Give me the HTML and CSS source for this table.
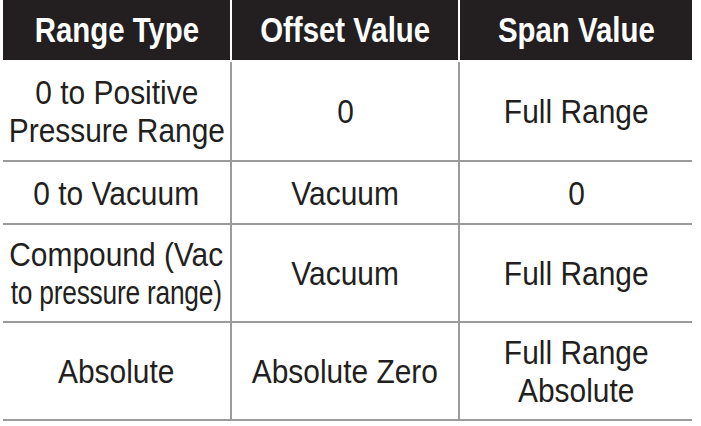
FILE: index.html
```html
<!DOCTYPE html>
<html>
<head>
<meta charset="utf-8">
<link rel="stylesheet" href="styles.css">
</head>
<body>
<div class="table">
  <div class="row head">
    <div class="cell"><span class="txt">Range Type</span></div>
    <div class="cell"><span class="txt">Offset Value</span></div>
    <div class="cell"><span class="txt">Span Value</span></div>
  </div>
  <div class="row r1">
    <div class="cell"><span class="txt">0 to Positive<br>Pressure Range</span></div>
    <div class="cell"><span class="txt">0</span></div>
    <div class="cell"><span class="txt">Full Range</span></div>
  </div>
  <div class="row r2">
    <div class="cell"><span class="txt">0 to Vacuum</span></div>
    <div class="cell"><span class="txt">Vacuum</span></div>
    <div class="cell"><span class="txt">0</span></div>
  </div>
  <div class="row r3">
    <div class="cell"><span class="txt">Compound (Vac<br><span class="tight">to pressure range)</span></span></div>
    <div class="cell"><span class="txt">Vacuum</span></div>
    <div class="cell"><span class="txt">Full Range</span></div>
  </div>
  <div class="row r4">
    <div class="cell"><span class="txt">Absolute</span></div>
    <div class="cell"><span class="txt">Absolute Zero</span></div>
    <div class="cell"><span class="txt">Full Range<br>Absolute</span></div>
  </div>
</div>
</body>
</html>
```
FILE: styles.css
```css
html, body {
  margin: 0;
  padding: 0;
  background: #ffffff;
}
.table {
  padding-left: 3px;
  width: 689px;
  font-family: "Liberation Sans", Arial, sans-serif;
  color: #231f20;
}
.row {
  display: grid;
  grid-template-columns: 229px 228px 232px;
}
.cell {
  box-sizing: border-box;
  display: flex;
  align-items: center;
  justify-content: center;
  text-align: center;
  border-bottom: 2px solid #9b9b9b;
  overflow: visible;
}
.txt {
  display: inline-block;
  white-space: nowrap;
  font-size: 34px;
  line-height: 38px;
  transform: scaleX(0.88);
  transform-origin: center;
}
.row .cell:nth-child(1),
.row .cell:nth-child(2) {
  border-right: 2px solid #9b9b9b;
}
.head {
  height: 60px;
  margin-bottom: 2px;
}
.head .cell {
  background: #231f20;
  color: #ffffff;
  border-bottom: none;
}
.head .txt {
  font-weight: bold;
  font-size: 35px;
  line-height: 40px;
  transform: scaleX(0.84);
}
.head .cell:nth-child(1),
.head .cell:nth-child(2) {
  border-right: 2px solid #ffffff;
}
.r1 { height: 100px; }
.r2 { height: 63px; }
.r3 { height: 98px; }
.r4 { height: 98px; }
.tight {
  display: inline-block;
  letter-spacing: -0.3px;
  transform: scaleX(0.88);
  transform-origin: center;
}
```
